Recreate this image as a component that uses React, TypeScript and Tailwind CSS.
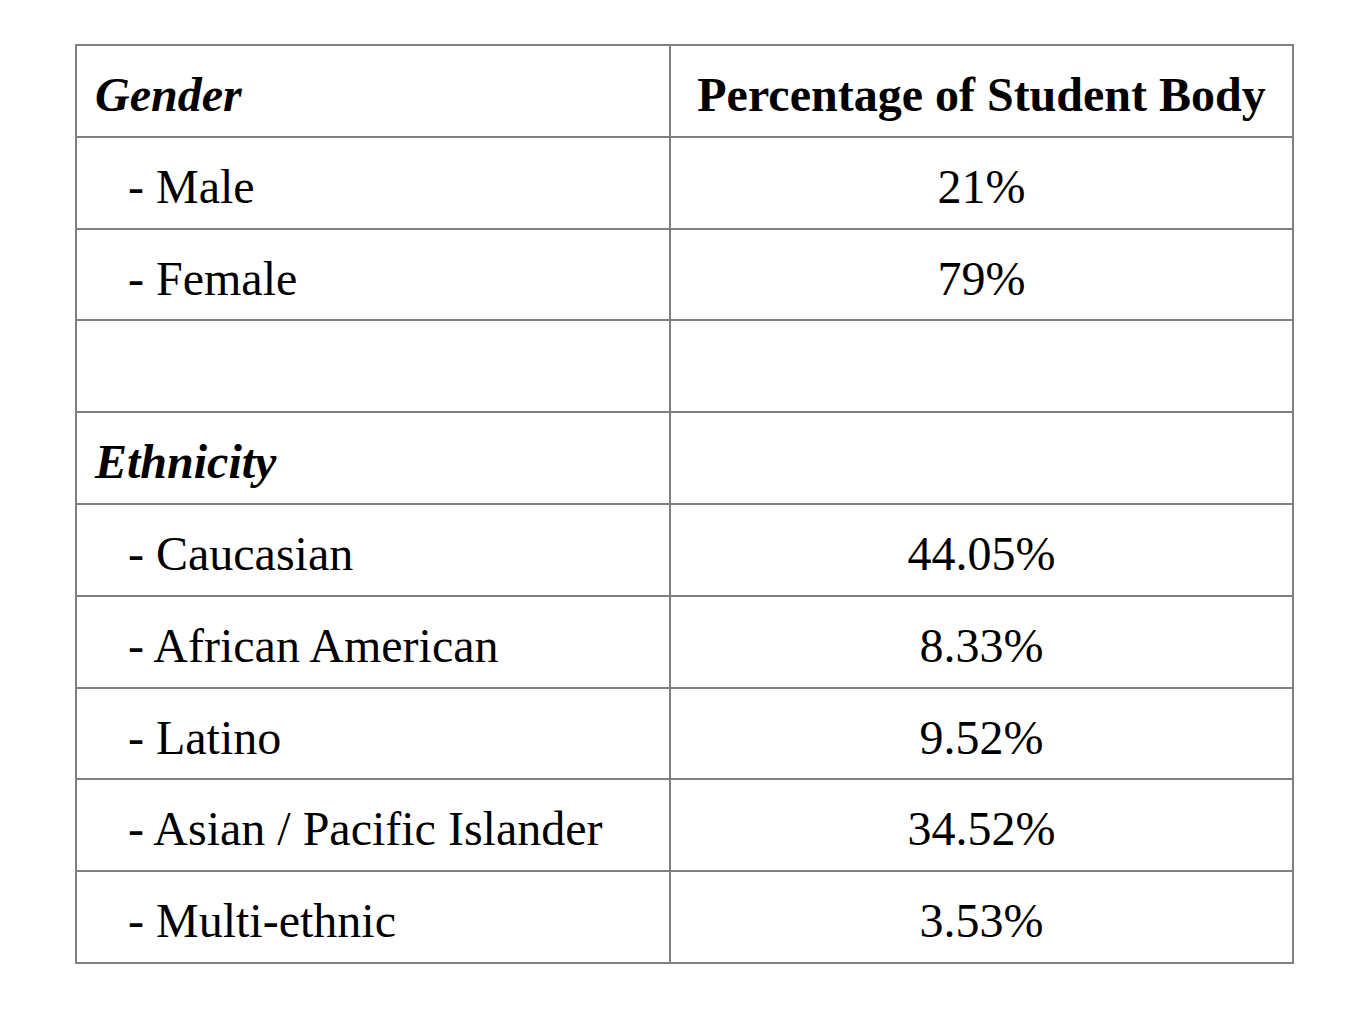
import React from 'react';

type Row = {
  label: string;
  value: string;
  kind: 'head' | 'item' | 'blank';
};

const rows: Row[] = [
  { label: 'Male', value: '21%', kind: 'item' },
  { label: 'Female', value: '79%', kind: 'item' },
  { label: '', value: '', kind: 'blank' },
  { label: 'Ethnicity', value: '', kind: 'head' },
  { label: 'Caucasian', value: '44.05%', kind: 'item' },
  { label: 'African American', value: '8.33%', kind: 'item' },
  { label: 'Latino', value: '9.52%', kind: 'item' },
  { label: 'Asian / Pacific Islander', value: '34.52%', kind: 'item' },
  { label: 'Multi-ethnic', value: '3.53%', kind: 'item' },
];

const cell = 'h-[91.8px] border-b-2 border-[#808080] pt-[25px] leading-none whitespace-nowrap';

const App: React.FC = () => {
  return (
    <div className="min-h-screen bg-white pt-[44px] pl-[75px] text-black font-['Liberation_Serif','Times_New_Roman',serif] text-[48px]">
      <div className="grid w-[1219px] grid-cols-[594px_623px] border-l-2 border-t-2 border-[#808080]">
        {/* header */}
        <div className={`${cell} border-r-2 pl-[18px] font-bold italic`}>Gender</div>
        <div className={`${cell} border-r-2 text-center font-bold`}>Percentage of Student Body</div>

        {rows.map((r, i) => (
          <React.Fragment key={i}>
            <div
              className={`${cell} border-r-2 ${
                r.kind === 'head' ? 'pl-[18px] font-bold italic' : 'pl-[51px]'
              }`}
            >
              {r.kind === 'item' ? `- ${r.label}` : r.label}
            </div>
            <div className={`${cell} border-r-2 text-center`}>{r.value}</div>
          </React.Fragment>
        ))}
      </div>
    </div>
  );
};

export default App;
